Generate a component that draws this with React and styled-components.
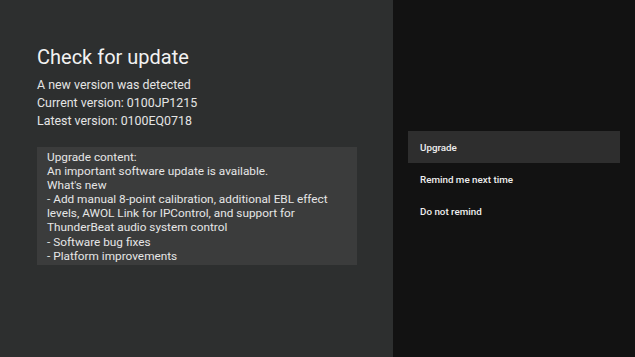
import React from 'react';
import styled, { createGlobalStyle } from 'styled-components';

const GlobalStyle = createGlobalStyle`
  html, body {
    margin: 0;
    padding: 0;
    background: #121212;
  }
  body {
    font-family: Roboto, "Noto Sans", sans-serif;
    -webkit-font-smoothing: antialiased;
  }
`;

const Screen = styled.div`
  display: flex;
  width: 635px;
  height: 357px;
  overflow: hidden;
`;

const Main = styled.div`
  width: 393px;
  flex-shrink: 0;
  background: #2d2f2f;
  padding: 44px 36px 0 37px;
  box-sizing: border-box;
  color: #ececec;
`;

const Title = styled.h1`
  margin: 0 0 6px;
  font-size: 20px;
  font-weight: 400;
  line-height: 26px;
  color: #f2f2f2;
`;

const InfoLine = styled.div`
  font-size: 12.4px;
  line-height: 18px;
  color: #e4e4e4;
`;

const Notes = styled.div`
  margin-top: 17px;
  width: 320px;
  background: #3b3c3c;
  padding: 3px 10px 2px;
  box-sizing: border-box;
  font-size: 11.8px;
  line-height: 14.1px;
  color: #e6e6e6;
  white-space: pre-line;
`;

const Side = styled.div`
  flex: 1;
  background: #121212;
  padding: 131px 15px 0 15px;
  box-sizing: border-box;
`;

const Option = styled.div`
  height: 32px;
  display: flex;
  align-items: center;
  padding-left: 12px;
  font-size: 9.8px;
  font-weight: 500;
  color: #eeeeee;
  background: ${p => (p.$active ? '#2e2e2e' : 'transparent')};
`;

const notes = `Upgrade content:
An important software update is available.
What's new
- Add manual 8-point calibration, additional EBL effect levels, AWOL Link for IPControl, and support for ThunderBeat audio system control
- Software bug fixes
- Platform improvements`;

export default function App() {
  return (
    <>
      <GlobalStyle />
      <Screen>
        <Main>
          <Title>Check for update</Title>
          <InfoLine>A new version was detected</InfoLine>
          <InfoLine>Current version: 0100JP1215</InfoLine>
          <InfoLine>Latest version: 0100EQ0718</InfoLine>
          <Notes>{notes}</Notes>
        </Main>
        <Side>
          <Option $active>Upgrade</Option>
          <Option>Remind me next time</Option>
          <Option>Do not remind</Option>
        </Side>
      </Screen>
    </>
  );
}
